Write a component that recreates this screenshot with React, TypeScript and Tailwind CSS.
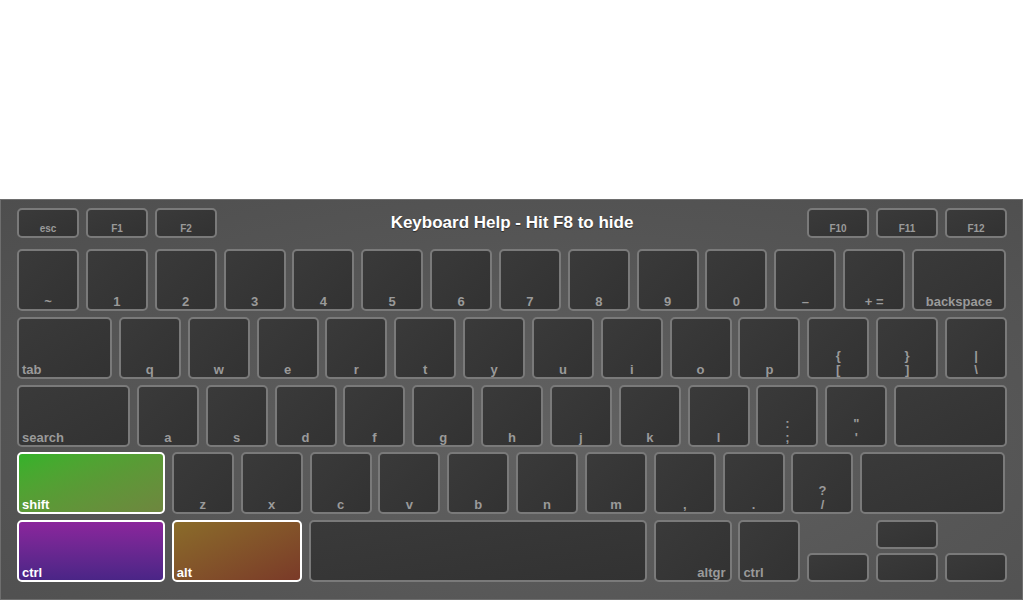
type KeyDef = {
  label?: string;
  top?: string;
  w: number;
  align?: 'left' | 'center' | 'right';
  tone?: 'shift' | 'ctrl' | 'alt';
};

const rows: KeyDef[][] = [
  [
    { label: '~', w: 62 },
    { label: '1', w: 62 },
    { label: '2', w: 62 },
    { label: '3', w: 62 },
    { label: '4', w: 62 },
    { label: '5', w: 62 },
    { label: '6', w: 62 },
    { label: '7', w: 62 },
    { label: '8', w: 62 },
    { label: '9', w: 62 },
    { label: '0', w: 62 },
    { label: '–', w: 62 },
    { label: '+ =', w: 62 },
    { label: 'backspace', w: 94 },
  ],
  [
    { label: 'tab', w: 95, align: 'left' },
    { label: 'q', w: 62 },
    { label: 'w', w: 62 },
    { label: 'e', w: 62 },
    { label: 'r', w: 62 },
    { label: 't', w: 62 },
    { label: 'y', w: 62 },
    { label: 'u', w: 62 },
    { label: 'i', w: 62 },
    { label: 'o', w: 62 },
    { label: 'p', w: 62 },
    { top: '{', label: '[', w: 62 },
    { top: '}', label: ']', w: 62 },
    { top: '|', label: '\\', w: 62 },
  ],
  [
    { label: 'search', w: 113, align: 'left' },
    { label: 'a', w: 62 },
    { label: 's', w: 62 },
    { label: 'd', w: 62 },
    { label: 'f', w: 62 },
    { label: 'g', w: 62 },
    { label: 'h', w: 62 },
    { label: 'j', w: 62 },
    { label: 'k', w: 62 },
    { label: 'l', w: 62 },
    { top: ':', label: ';', w: 62 },
    { top: '"', label: "'", w: 62 },
    { w: 113 },
  ],
  [
    { label: 'shift', w: 148, align: 'left', tone: 'shift' },
    { label: 'z', w: 62 },
    { label: 'x', w: 62 },
    { label: 'c', w: 62 },
    { label: 'v', w: 62 },
    { label: 'b', w: 62 },
    { label: 'n', w: 62 },
    { label: 'm', w: 62 },
    { label: ',', w: 62 },
    { label: '.', w: 62 },
    { top: '?', label: '/', w: 62 },
    { w: 145 },
  ],
];

const toneClass = {
  shift: 'border-white bg-gradient-to-br from-[#33b22a] via-[#5a9a36] to-[#6e863f] text-white',
  ctrl: 'border-white bg-gradient-to-b from-[#8b259c] to-[#4a2586] text-white',
  alt: 'border-white bg-gradient-to-br from-[#8a6c2a] to-[#7a3a28] text-white',
};

const alignClass = {
  left: 'items-start pl-[3px]',
  center: 'items-center',
  right: 'items-end pr-[4px]',
};

function Key({ k, h = 62 }: { k: KeyDef; h?: number }) {
  const align = k.align ?? 'center';
  const skin = k.tone
    ? toneClass[k.tone]
    : 'border-[#7a7a7a] bg-gradient-to-br from-[#3a3a3a] to-[#323232] text-[#9a9a9a]';
  return (
    <div
      className={`flex shrink-0 flex-col justify-end rounded-[5px] border-2 text-[13px] font-bold leading-[14px] ${skin} ${alignClass[align]}`}
      style={{ width: k.w, height: h }}
    >
      {k.top && <span>{k.top}</span>}
      {k.label && <span>{k.label}</span>}
    </div>
  );
}

function FnKey({ label }: { label: string }) {
  return (
    <div className="flex h-[30px] w-[62px] shrink-0 items-end justify-center rounded-[5px] border-2 border-[#7a7a7a] bg-gradient-to-br from-[#3a3a3a] to-[#323232] pb-[1px] text-[10px] font-bold leading-[12px] text-[#9a9a9a]">
      {label}
    </div>
  );
}

export default function App() {
  return (
    <div
      className="flex h-[600px] w-[1024px] flex-col bg-white"
      style={{ fontFamily: '"Liberation Sans", Arial, sans-serif' }}
    >
      <div className="h-[199px] shrink-0" />
      <div className="flex w-[1023px] flex-1 flex-col border border-[#6e6e6e] bg-[radial-gradient(ellipse_at_55%_60%,#626262,#555555_60%,#4e4e4e)] pl-[16px] pt-[8px]">
        <div className="flex w-[990px] items-center">
          <div className="flex gap-[7px]">
            <FnKey label="esc" />
            <FnKey label="F1" />
            <FnKey label="F2" />
          </div>
          <div className="flex-1 text-center text-[17px] font-bold text-white [text-shadow:0_1px_1px_rgba(0,0,0,0.5)]">
            Keyboard Help - Hit F8 to hide
          </div>
          <div className="flex gap-[7px]">
            <FnKey label="F10" />
            <FnKey label="F11" />
            <FnKey label="F12" />
          </div>
        </div>

        <div className="mt-[11px] flex w-[990px] flex-col gap-y-[5.8px]">
          {rows.map((row, i) => (
            <div key={i} className="flex gap-x-[6.85px]">
              {row.map((k, j) => (
                <Key key={j} k={k} />
              ))}
            </div>
          ))}
          <div className="flex gap-x-[6.85px]">
            <Key k={{ label: 'ctrl', w: 148, align: 'left', tone: 'ctrl' }} />
            <Key k={{ label: 'alt', w: 130, align: 'left', tone: 'alt' }} />
            <Key k={{ w: 338 }} />
            <Key k={{ label: 'altgr', w: 78, align: 'right' }} />
            <Key k={{ label: 'ctrl', w: 62, align: 'left' }} />
            <div className="flex items-end gap-x-[6.85px]">
              <Key k={{ w: 62 }} h={29} />
              <div className="flex flex-col gap-y-[4px]">
                <Key k={{ w: 62 }} h={29} />
                <Key k={{ w: 62 }} h={29} />
              </div>
              <Key k={{ w: 62 }} h={29} />
            </div>
          </div>
        </div>
      </div>
    </div>
  );
}
